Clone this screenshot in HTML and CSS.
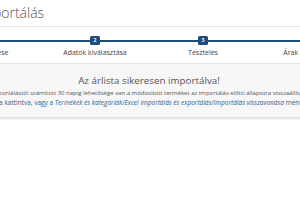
FILE: index.html
```html
<!DOCTYPE html>
<html lang="hu">
<head>
    <meta charset="UTF-8">
    <meta name="viewport" content="width=device-width, initial-scale=1.0">
    <title>Importálás</title>
    <link rel="stylesheet" href="styles.css">
</head>
<body>
    <div class="page">
        <h1 class="title">Importálás</h1>

        <ol class="steps">
            <li class="step"><span class="num">1</span><span class="label">Fájl feltöltése</span></li>
            <li class="step"><span class="num">2</span><span class="label">Adatok kiválasztása</span></li>
            <li class="step"><span class="num">3</span><span class="label">Tesztelés</span></li>
            <li class="step"><span class="num">4</span><span class="label">Árak importálása</span></li>
        </ol>

        <div class="panel">
            <h2 class="panel-title">Az árlista sikeresen importálva!</h2>
            <div class="text">
                <p class="line">Az importálástól számított 30 napig lehetősége van a módosított terméket az importálás előtti állapotra visszaállítani a</p>
                <p class="line link">gombra kattintva, vagy a <em>Termékek és kategóriák/Excel importálás és exportálás/Importálás visszavonása</em> menüpontban.</p>
            </div>
        </div>
    </div>
</body>
</html>
```

FILE: styles.css
```css
/* --- BASE ---------------------------------------------- */
* { box-sizing: border-box; margin: 0; padding: 0; }
html, body { width: 300px; height: 200px; overflow: hidden; background: #fff; font-family: "Open Sans", sans-serif; color: #555; }

.page {
    width: 432px;
    margin-left: -67px;
}

/* --- TITLE --------------------------------------------- */
.title {
    font-size: 14px;
    font-weight: 300;
    line-height: 20px;
    color: #555;
    padding: 3px 0 3px 44px;
    border-bottom: 1px solid #e6e6e6;
}

/* --- STEPS --------------------------------------------- */
.steps {
    list-style: none;
    display: grid;
    grid-template-columns: repeat(4, 1fr);
    margin-top: 9px;
    background: linear-gradient(#1d4d7a, #1d4d7a) 0 4px / 100% 2px no-repeat;
}
.step {
    display: flex;
    flex-direction: column;
    align-items: center;
}
.num {
    width: 10px;
    height: 9px;
    border-radius: 1.5px;
    background: #1d4d7a;
    color: #fff;
    font-size: 5px;
    font-weight: 700;
    line-height: 9px;
    text-align: center;
}
.label {
    margin-top: 3px;
    font-size: 7px;
    line-height: 9px;
    color: #444;
    white-space: nowrap;
}

/* --- RESULT PANEL -------------------------------------- */
.panel {
    margin-top: 6px;
    padding: 10px 0 10px;
    background: #f7f7f7;
    border: 1px solid #e4e4e4;
    box-shadow: 0 1px 2px rgba(0, 0, 0, .12);
}
.panel-title {
    font-size: 9.8px;
    font-weight: 400;
    line-height: 13px;
    color: #555;
    text-align: center;
    margin-bottom: 2px;
}
.text { padding-left: 49px; }
.line {
    font-size: 6px;
    line-height: 9px;
    white-space: nowrap;
    color: #555;
}
.line.link { color: #2f5f8e; font-size: 6.5px; text-indent: -4px; }
.line em { color: #2f5f8e; }
```
